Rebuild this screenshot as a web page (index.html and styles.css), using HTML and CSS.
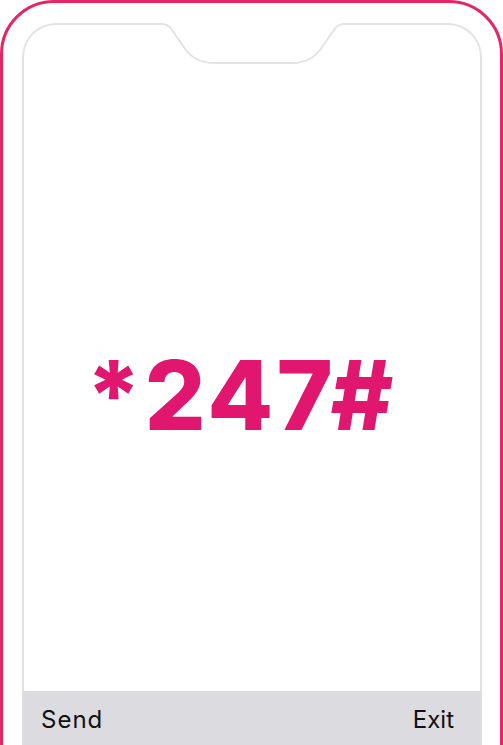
FILE: index.html
```html
<!DOCTYPE html>
<html lang="en">
<head>
<meta charset="utf-8">
<title>*247#</title>
<link rel="stylesheet" href="styles.css">
</head>
<body>
<div class="phone">
  <div class="screen">
    <svg class="notch" viewBox="22 23 460 70" width="460" height="70" aria-hidden="true">
      <rect x="140" y="21" width="226" height="6" fill="#ffffff"/>
      <path d="M 138 24 H 162 Q 168 24 172 30 L 186 50 Q 196 63 214 63 H 292 Q 310 63 320 50 L 334 30 Q 338 24 344 24 H 368" fill="none" stroke="#e3e3e3" stroke-width="2"/>
    </svg>
    <div class="code">*247#</div>
  </div>
  <div class="bar">
    <span class="key">Send</span>
    <span class="key">Exit</span>
  </div>
</div>
</body>
</html>
```

FILE: styles.css
```css
html, body {
  margin: 0;
  padding: 0;
  height: 745px;
  overflow: hidden;
  background: #ffffff;
}

.phone {
  box-sizing: border-box;
  width: 503px;
  height: 820px;
  border: 3px solid #e62569;
  border-radius: 54px;
  padding: 20px 18px 0 19px;
  background: #ffffff;
}

.screen {
  box-sizing: border-box;
  position: relative;
  height: 668px;
  border: 2px solid #e3e3e3;
  border-bottom: 0;
  border-radius: 34px 34px 0 0;
  padding-top: 320px;
}

.notch {
  position: absolute;
  left: -2px;
  top: -2px;
  display: block;
}

.code {
  font-family: "Inter", "Liberation Sans", sans-serif;
  font-weight: 800;
  font-size: 96px;
  line-height: 100px;
  color: #e1176f;
  text-align: center;
  padding-right: 22px;
  letter-spacing: 3px;
}

.bar {
  box-sizing: border-box;
  width: 460px;
  height: 80px;
  background: #dcdbe0;
  display: flex;
  justify-content: space-between;
  padding: 14px 28px 0 19px;
}

.key {
  font-family: "Inter", "Liberation Sans", sans-serif;
  font-size: 24px;
  line-height: 30px;
  color: #111111;
}

.key:first-child {
  letter-spacing: 1px;
}
```
